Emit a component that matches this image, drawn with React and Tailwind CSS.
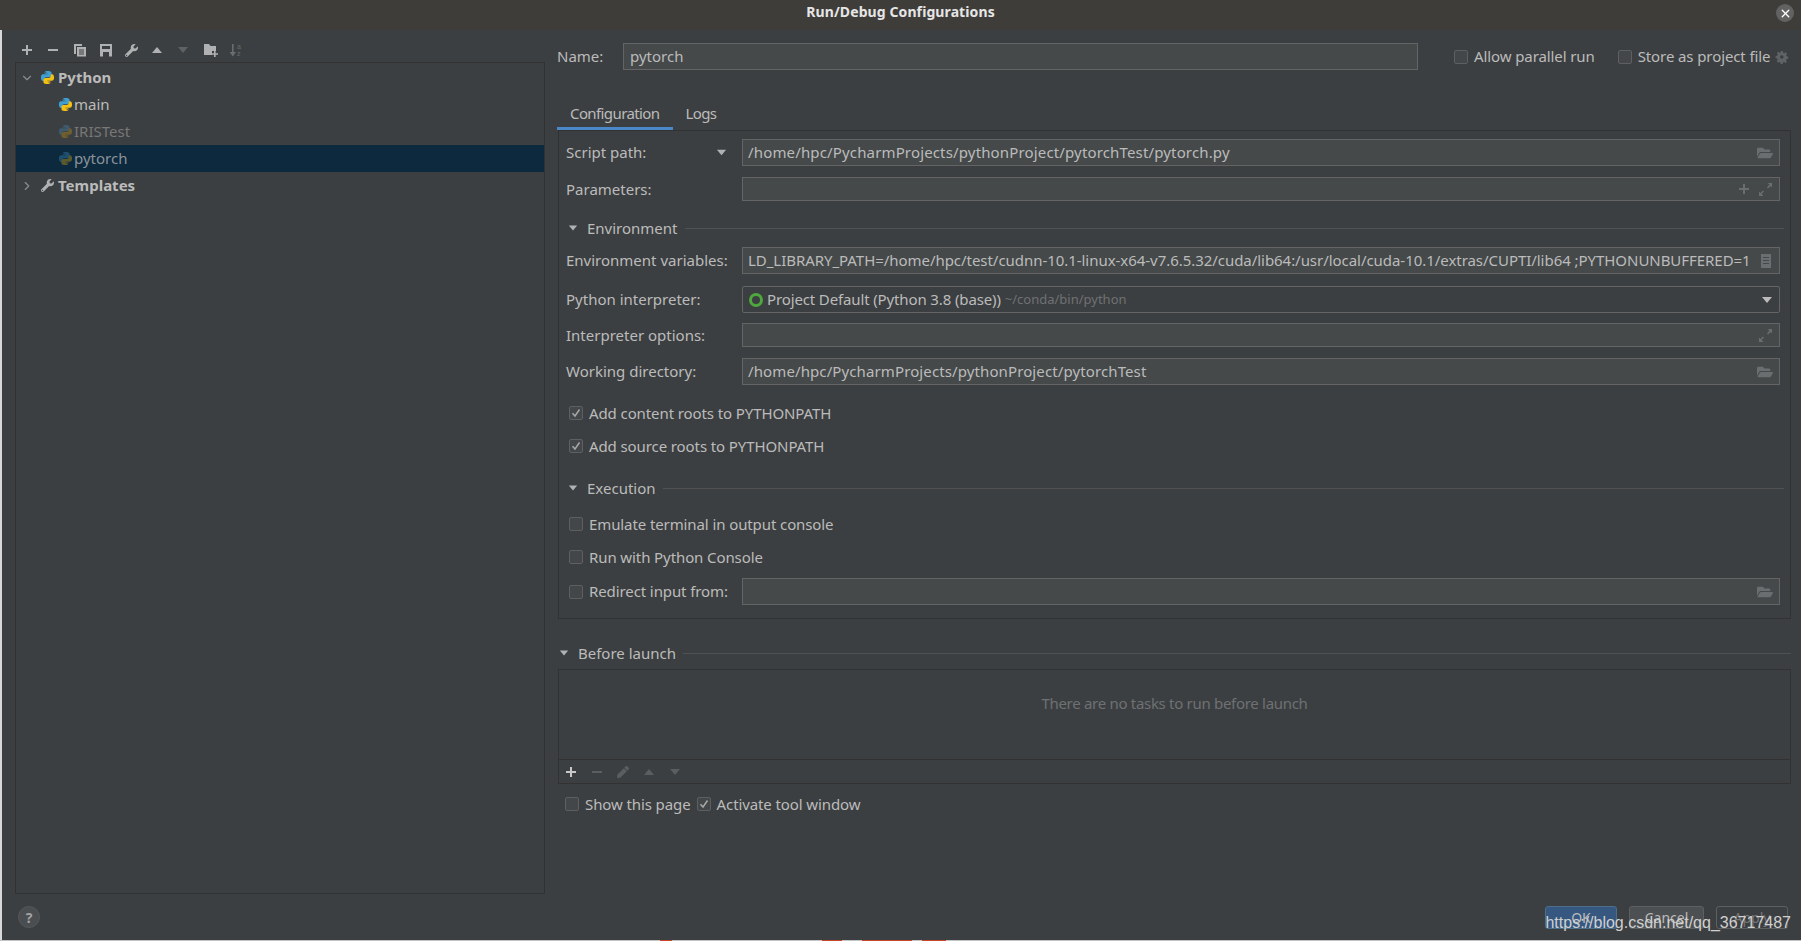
import { FaWrench, FaFolderOpen, FaPen } from "react-icons/fa";
import { ChevronDown, ChevronRight, X } from "lucide-react";

const font = "font-['Noto_Sans','Open_Sans',sans-serif]";

const PythonIcon = ({ dim = false, selected = false }) => {
  const blue = selected ? "#1f4f6e" : dim ? "#3f5a6c" : "#3f9fd2";
  const yellow = selected ? "#5c5a2c" : dim ? "#6e5f2c" : "#f3c014";
  const snake =
    "M7.9 1C4.9 1 5 2.4 5 2.4V4h3.1v.5H3.4S1 4.2 1 7.9s2.1 3.7 2.1 3.7h1.4V9.8s-.1-2.2 2.2-2.2h3.5s2.1 0 2.1-2V2.9S12.6 1 7.9 1zM6.2 2a.6.6 0 1 1 0 1.2.6.6 0 0 1 0-1.2z";
  return (
    <svg width="15" height="15" viewBox="0 0 16 16" className="shrink-0">
      <path d={snake} fill={blue} fillRule="evenodd" />
      <path d={snake} fill={yellow} fillRule="evenodd" transform="rotate(180 8 8)" />
    </svg>
  );
};

const Triangle = ({ up = false, color = "#afb1b3", size = 12 }) => (
  <svg width={size} height={size} viewBox="0 0 12 12" className="shrink-0">
    <path d={up ? "M1 9h10L6 3z" : "M1 3h10L6 9z"} fill={color} />
  </svg>
);

const PlusIcon = ({ color = "#afb1b3" }) => (
  <svg width="12" height="12" viewBox="0 0 12 12" className="shrink-0">
    <path d="M5 1h2v4h4v2H7v4H5V7H1V5h4z" fill={color} />
  </svg>
);

const MinusIcon = ({ color = "#afb1b3" }) => (
  <svg width="12" height="12" viewBox="0 0 12 12" className="shrink-0">
    <path d="M1 5h10v2H1z" fill={color} />
  </svg>
);

const CopyIcon = () => (
  <svg width="14" height="14" viewBox="0 0 14 14" className="shrink-0">
    <path d="M1 1h8v2H3v8H1z" fill="#afb1b3" />
    <path d="M4 4h9v9.5H4zM6 6.5v1h5v-1zM6 8.5v1h5v-1zM6 10.5v1h5v-1z" fill="#afb1b3" fillRule="evenodd" />
  </svg>
);

const SaveIcon = () => (
  <svg width="14" height="14" viewBox="0 0 14 14" className="shrink-0">
    <path d="M1 1h12v12.5H1zM3 3v3h8V3zM4 9v4.5h6V9z" fill="#afb1b3" fillRule="evenodd" />
  </svg>
);

const FolderPlusIcon = () => (
  <svg width="16" height="14" viewBox="0 0 16 14" className="shrink-0">
    <path d="M1 1h5l1.5 2H13v5H9v4H1z" fill="#afb1b3" />
    <path d="M11 8h1.6v2.2H15v1.6h-2.4V14H11v-2.2H9v-1.6h2z" fill="#afb1b3" />
  </svg>
);

const SortIcon = () => (
  <svg width="14" height="14" viewBox="0 0 14 14" className="shrink-0">
    <path d="M3 1h1.6v8H7l-3.2 4.5L.6 9H3z" fill="#6a6c6e" />
    <text x="8" y="6" fontSize="7" fill="#6a6c6e" fontFamily="Liberation Sans, sans-serif">a</text>
    <text x="8" y="13" fontSize="7" fill="#6a6c6e" fontFamily="Liberation Sans, sans-serif">z</text>
  </svg>
);

const ExpandIcon = () => (
  <svg width="15" height="15" viewBox="0 0 15 15" className="shrink-0">
    <path d="M9.5 1H14v4.5l-1.5-1.5-2.5 2.500-1-1L11.500 2.500zM5.500 14H1V9.500L2.500 11 5 8.500l1 1L3.500 12z" fill="#6b6e70" />
  </svg>
);

const GearIcon = () => (
  <svg width="14" height="14" viewBox="0 0 14 14" className="shrink-0">
    <path
      d="M5.8 1h2l.3 1.6 1.3.6 1.4-.9 1.2 1.4-.9 1.3.5 1.3 1.6.4v2l-1.6.3-.6 1.3.9 1.4-1.4 1.2-1.3-.9-1.3.5-.3 1.6h-2l-.3-1.6-1.3-.6-1.4.9L1.8 11l.9-1.3-.5-1.3L.6 8V6l1.6-.3.6-1.3-.9-1.4 1.4-1.2 1.3.9 1.3-.5zM6.8 5.2a1.8 1.8 0 1 0 0 3.6 1.8 1.8 0 0 0 0-3.6z"
      fill="#606365"
      fillRule="evenodd"
    />
  </svg>
);

const ListIcon = () => (
  <svg width="12" height="14" viewBox="0 0 12 14" className="shrink-0">
    <path d="M1 0h10v14H1zM3 3v1h6V3zM3 6v1h6V6zM3 9v1h6V9z" fill="#6b6e70" fillRule="evenodd" />
  </svg>
);

const Checkbox = ({ checked = false }) => (
  <span className="flex h-[14px] w-[14px] shrink-0 items-center justify-center rounded-[2px] border border-[#5d5f60] bg-[#43474a]">
    {checked && (
      <svg width="10" height="10" viewBox="0 0 10 10">
        <path d="M1.5 5.2 4 8l4.5-6.5" fill="none" stroke="#a7a7a7" strokeWidth="1.5" />
      </svg>
    )}
  </span>
);

const CheckRow = ({ checked, label, className = "" }) => (
  <div className={`flex h-5 shrink-0 items-center gap-[6px] whitespace-nowrap tracking-[-0.1px] ${className}`}>
    <Checkbox checked={checked} />
    <span>{label}</span>
  </div>
);

const Field = ({ h = "h-[27px]", children, right, className = "" }) => (
  <div className={`flex min-w-0 flex-1 items-center border border-[#646464] bg-[#45494a] pl-[5px] pr-[6px] ${h} ${className}`}>
    <div className="min-w-0 flex-1 whitespace-nowrap">{children}</div>
    {right}
  </div>
);

const FormRow = ({ label, className = "", children }) => (
  <div className={`flex items-center ${className}`}>
    <span className="w-[176px] shrink-0">{label}</span>
    {children}
  </div>
);

const SectionHead = ({ label, className = "" }) => (
  <div className={`flex h-4 items-center ${className}`}>
    <Triangle size={10} />
    <span className="ml-[9px] mr-[7px]">{label}</span>
    <span className="h-px flex-1 bg-[#515151]" />
  </div>
);

const FolderBtn = () => <FaFolderOpen className="shrink-0 text-[#6b6e70]" size={16} />;

const TreeRow = ({ children, className = "" }) => (
  <div className={`flex h-[27px] items-center ${className}`}>{children}</div>
);

export default function App() {
  return (
    <div className={`flex h-[941px] w-[1801px] flex-col overflow-hidden bg-[#3c3f41] text-[15px] text-[#bbbbbb] ${font}`}>
      {/* Title bar */}
      <div className="relative flex h-[30px] shrink-0 items-center justify-center bg-[#3f3d3a] pb-[8px] text-[14px] font-bold tracking-[0.1px] text-[#e6e6e6]">
        Run/Debug Configurations
        <span className="absolute right-[7px] top-[4px] flex h-[18px] w-[18px] items-center justify-center rounded-full bg-[#626262] text-white">
          <X size={13} strokeWidth={2.5} />
        </span>
      </div>

      <div className="flex min-h-0 flex-1">
        <div className="w-[2px] shrink-0 bg-[#d8d8d8]" />

        {/* Left column */}
        <div className="ml-[13px] flex w-[530px] shrink-0 flex-col">
          <div className="mt-[8px] flex h-[24px] items-center pl-[6px]">
            <span className="flex w-[26px] justify-start"><PlusIcon /></span>
            <span className="flex w-[26px] justify-start"><MinusIcon /></span>
            <span className="flex w-[26px] justify-start"><CopyIcon /></span>
            <span className="flex w-[26px] justify-start"><SaveIcon /></span>
            <span className="flex w-[26px] justify-start"><FaWrench size={13} className="text-[#afb1b3]" /></span>
            <span className="flex w-[26px] justify-start"><Triangle up /></span>
            <span className="flex w-[26px] justify-start"><Triangle color="#5f6163" /></span>
            <span className="flex w-[26px] justify-start"><FolderPlusIcon /></span>
            <span className="flex w-[26px] justify-start"><SortIcon /></span>
          </div>

          <div className="h-[832px] border border-[#323232] pt-[1px]">
            <TreeRow className="pl-[4px]">
              <ChevronDown size={14} className="mr-[6px] text-[#8a8c8e]" />
              <PythonIcon />
              <span className="ml-[3px] font-bold">Python</span>
            </TreeRow>
            <TreeRow className="pl-[42px]">
              <PythonIcon />
              <span className="ml-[1px]">main</span>
            </TreeRow>
            <TreeRow className="pl-[42px] text-[#777777]">
              <PythonIcon dim />
              <span className="ml-[1px]">IRISTest</span>
            </TreeRow>
            <TreeRow className="bg-[#0d293e] pl-[42px] text-[#8a9299]">
              <PythonIcon selected />
              <span className="ml-[1px]">pytorch</span>
            </TreeRow>
            <TreeRow className="pl-[4px]">
              <ChevronRight size={14} className="mr-[6px] text-[#8a8c8e]" />
              <FaWrench size={13} className="ml-[1px] mr-[1px] text-[#afb1b3]" />
              <span className="ml-[3px] font-bold">Templates</span>
            </TreeRow>
          </div>

          <div className="ml-[3px] mt-[12px] flex h-[22px] w-[22px] items-center justify-center rounded-full border border-[#55585a] bg-[#4a4e50] text-[14px] font-bold text-[#a0a2a4]">
            ?
          </div>
        </div>

        {/* Right column */}
        <div className="ml-[13px] flex w-[1233px] shrink-0 flex-col">
          <div className="mt-[13px] flex h-[27px] items-center">
            <span className="-ml-px w-[66px] shrink-0">Name:</span>
            <div className="flex h-[27px] w-[795px] shrink-0 items-center border border-[#646464] bg-[#45494a] pl-[6px]">pytorch</div>
            <CheckRow label="Allow parallel run" className="ml-[36px]" />
            <CheckRow label="Store as project file" className="ml-[23px]" />
            <span className="ml-[5px]"><GearIcon /></span>
          </div>

          {/* Tabs */}
          <div className="mt-[30px] flex h-[30px] items-end tracking-[-0.6px]">
            <div className="-ml-px flex h-[30px] items-center border-b-[3px] border-[#4a88c7] px-[13px]">Configuration</div>
            <div className="flex h-[30px] items-center px-[13px] pb-[3px]">Logs</div>
          </div>

          {/* Configuration panel */}
          <div className="border border-[#323232] pl-[7px] pr-[10px] pb-[13px]">
            <FormRow label={<span className="flex items-center justify-between pr-[15px]">Script path:<Triangle size={11} /></span>} className="mt-[8px]">
              <Field right={<FolderBtn />} className="tracking-[0.15px]">/home/hpc/PycharmProjects/pythonProject/pytorchTest/pytorch.py</Field>
            </FormRow>
            <FormRow label="Parameters:" className="mt-[11px]">
              <Field h="h-[24px]" right={<span className="flex items-center gap-[8px]"><PlusIcon color="#6b6e70" /><ExpandIcon /></span>} />
            </FormRow>

            <SectionHead label="Environment" className="ml-[2px] mr-[-4px] mt-[19px]" />
            <FormRow label="Environment variables:" className="mt-[11px]">
              <Field h="h-[27px]" className="tracking-[-0.045px]" right={<span className="ml-[8px] mr-[1px]"><ListIcon /></span>}>
                LD_LIBRARY_PATH=/home/hpc/test/cudnn-10.1-linux-x64-v7.6.5.32/cuda/lib64:/usr/local/cuda-10.1/extras/CUPTI/lib64 ;PYTHONUNBUFFERED=1
              </Field>
            </FormRow>
            <FormRow label="Python interpreter:" className="mt-[12px]">
              <div className="flex h-[27px] min-w-0 flex-1 items-center rounded-[2px] border border-[#646464] bg-[#3c3f41] pl-[6px] pr-[6px]">
                <span className="h-[14px] w-[14px] shrink-0 rounded-full border-[3px] border-[#4fa83d]" />
                <span className="ml-[4px] tracking-[-0.13px]">Project Default (Python 3.8 (base))</span>
                <span className="ml-[4px] flex-1 text-[13px] text-[#6e7173]">~/conda/bin/python</span>
                <Triangle size={12} color="#bbbbbb" />
              </div>
            </FormRow>
            <FormRow label="Interpreter options:" className="mt-[10px]">
              <Field h="h-[24px]" right={<ExpandIcon />} />
            </FormRow>
            <FormRow label="Working directory:" className="mt-[11px]">
              <Field right={<FolderBtn />} className="tracking-[0.11px]">/home/hpc/PycharmProjects/pythonProject/pytorchTest</Field>
            </FormRow>
            <CheckRow checked label="Add content roots to PYTHONPATH" className="ml-[3px] mt-[18px]" />
            <CheckRow checked label="Add source roots to PYTHONPATH" className="ml-[3px] mt-[13px]" />

            <SectionHead label="Execution" className="ml-[2px] mr-[-4px] mt-[24px]" />
            <CheckRow label="Emulate terminal in output console" className="ml-[3px] mt-[18px]" />
            <CheckRow label="Run with Python Console" className="ml-[3px] mt-[13px]" />
            <div className="mt-[11px] flex items-center">
              <div className="w-[176px] shrink-0 pl-[3px]">
                <CheckRow label="Redirect input from:" />
              </div>
              <Field right={<FolderBtn />} />
            </div>
          </div>

          <SectionHead label="Before launch" className="mt-[26px] pl-[1px]" />
          <div className="mt-[8px] flex h-[115px] flex-col border border-[#323232]">
            <div className="flex flex-1 items-center justify-center pb-[22px] tracking-[-0.3px] text-[#6e7173]">
              There are no tasks to run before launch
            </div>
            <div className="flex h-[24px] items-center gap-[14px] border-t border-[#323232] pl-[6px]">
              <PlusIcon color="#c8c8c8" />
              <MinusIcon color="#5b5e60" />
              <FaPen size={12} className="text-[#5b5e60]" />
              <Triangle up color="#5b5e60" />
              <Triangle color="#5b5e60" />
            </div>
          </div>

          <div className="mt-[10px] flex h-5 items-center pl-[7px]">
            <CheckRow label="Show this page" />
            <CheckRow checked label="Activate tool window" className="ml-[6px]" />
          </div>

          {/* Dialog buttons */}
          <div className="relative mt-[92px] flex h-[23px] justify-end gap-3 pr-[3px] text-[14px]">
            <div className="flex w-[72px] items-center justify-center rounded-[3px] border border-[#4c708c] bg-[#365880]">OK</div>
            <div className="flex w-[75px] items-center justify-center rounded-[3px] border border-[#5e6060] bg-[#4c5052]">Cancel</div>
            <div className="flex w-[72px] items-center justify-center rounded-[3px] border border-[#5e6060] text-[#777777]">Apply</div>
            <span className="absolute right-0 top-[9px] font-['Liberation_Sans',sans-serif] text-[16px] leading-none text-[#d0d0d0]">
              https://blog.csdn.net/qq_36717487
            </span>
          </div>
        </div>
      </div>

      {/* Desktop peeking below the window */}
      <div className="flex h-px shrink-0 bg-[#c4c4c4]">
        <span className="ml-[660px] h-px w-[12px] bg-[#c8452a]" />
        <span className="ml-[150px] h-px w-[20px] bg-[#c8452a]" />
        <span className="ml-[20px] h-px w-[50px] bg-[#c8452a]" />
        <span className="ml-[10px] h-px w-[24px] bg-[#c8452a]" />
      </div>
    </div>
  );
}
